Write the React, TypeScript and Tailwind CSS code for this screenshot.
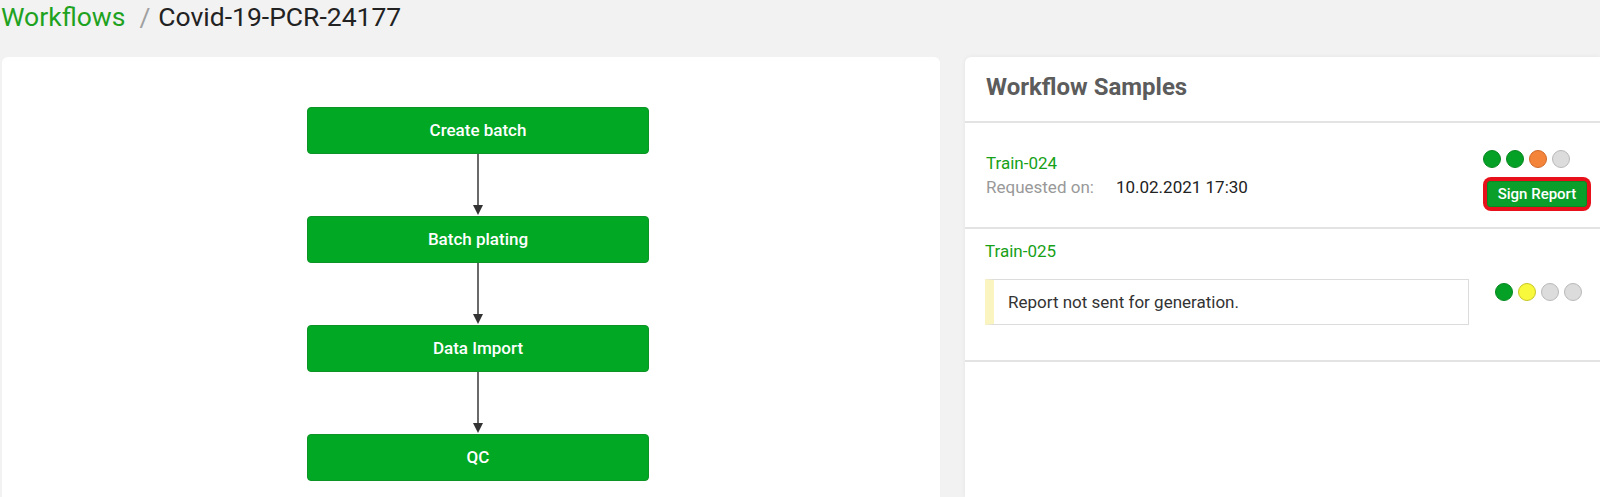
import React from 'react'

const steps = ['Create batch', 'Batch plating', 'Data Import', 'QC']

function Arrow() {
  return (
    <svg width="14" height="62" viewBox="0 0 14 62" className="block">
      <line x1="7" y1="0" x2="7" y2="53" stroke="#444" strokeWidth="1.6" />
      <polygon points="2,51 12,51 7,61" fill="#333" />
    </svg>
  )
}

function Dot({ color }: { color: 'green' | 'orange' | 'gray' | 'yellow' }) {
  const cls = {
    green: 'bg-[#04a126] border-[#07881f]',
    orange: 'bg-[#f4843a] border-[#d0692a]',
    gray: 'bg-[#dcdcdc] border-[#b9b9b9]',
    yellow: 'bg-[#f8f83c] border-[#c9c72a]',
  }[color]
  return <span className={`block w-[18px] h-[18px] rounded-full border ${cls}`} />
}

export default function App() {
  return (
    <div
      className="h-[497px] w-[1600px] overflow-hidden bg-[#f2f2f2] flex flex-col"
      style={{ fontFamily: 'Roboto, "Liberation Sans", sans-serif' }}
    >
      <div className="h-[57px] pt-[2px] flex items-start text-[26.5px] leading-[30px] whitespace-nowrap">
        <span className="ml-[1px] text-[#1fa21f]">Workflows</span>
        <span className="ml-[14px] text-[#a0a0a0]">/</span>
        <span className="ml-[8px] text-[#222]">Covid-19-PCR-24177</span>
      </div>

      <div className="flex flex-1 min-h-0">
        <div className="ml-[2px] w-[938px] bg-white rounded-t-[6px] pt-[50px] pl-[305px]">
          <div className="flex flex-col items-center w-[342px]">
            {steps.map((s, i) => (
              <React.Fragment key={s}>
                <div className="w-[342px] h-[47px] rounded-[4px] bg-[#00a823] border border-[#0d9326] flex items-center justify-center text-white text-[17px] font-medium">
                  {s}
                </div>
                {i < steps.length - 1 && <Arrow />}
              </React.Fragment>
            ))}
          </div>
        </div>

        <div className="ml-[25px] flex-1 bg-white rounded-tl-[6px] shadow-[0_0_5px_rgba(0,0,0,0.06)]">
          <div className="h-[66px] border-b-2 border-[#e3e3e3] pt-[16px] px-[21px]">
            <h2 className="text-[24px] leading-[28px] font-bold text-[#5c5c5c]">Workflow Samples</h2>
          </div>

          <div className="h-[106px] border-b-2 border-[#e3e3e3] flex justify-between items-start pl-[21px] pr-[9px] pt-[27px] text-[17px] leading-[24px]">
            <div className="pt-[1px]">
              <div className="text-[#17a117]">Train-024</div>
              <div className="flex">
                <span className="text-[#999]">Requested on:</span>
                <span className="ml-[22px] text-[#222]">10.02.2021 17:30</span>
              </div>
            </div>
            <div className="flex flex-col items-start">
              <div className="flex gap-[5px]">
                <Dot color="green" />
                <Dot color="green" />
                <Dot color="orange" />
                <Dot color="gray" />
              </div>
              <div className="mt-[9px] p-[4px] bg-[#e8101a] rounded-[8px]">
                <button className="w-[100px] h-[26px] rounded-[3px] bg-[#0a9f2a] border border-[#0b8a24] text-white text-[15px] font-medium leading-none flex items-center justify-center">
                  Sign Report
                </button>
              </div>
            </div>
          </div>

          <div className="h-[133px] border-b-2 border-[#e3e3e3] pl-[20px] pt-[10px] text-[17px] leading-[24px]">
            <div className="text-[#17a117]">Train-025</div>
            <div className="mt-[16px] flex items-start">
              <div className="w-[484px] border border-[#dcdcdc] border-l-[9px] border-l-[#faf4c1] py-[10px] pl-[14px] text-[#333]">
                Report not sent for generation.
              </div>
              <div className="ml-[26px] mt-[4px] flex gap-[5px]">
                <Dot color="green" />
                <Dot color="yellow" />
                <Dot color="gray" />
                <Dot color="gray" />
              </div>
            </div>
          </div>
        </div>
      </div>
    </div>
  )
}
